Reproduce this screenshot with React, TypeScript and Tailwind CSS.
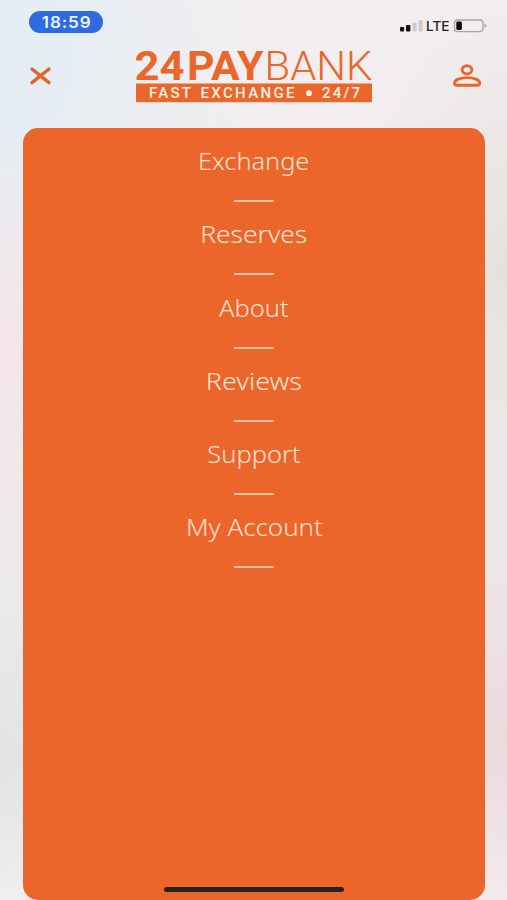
import clsx from "clsx";

const menuItems = [
  { label: "Exchange", scale: "scale-x-[1.055]" },
  { label: "Reserves", scale: "scale-x-[1.1]" },
  { label: "About", scale: "scale-x-[1.06]" },
  { label: "Reviews", scale: "scale-x-[1.12]" },
  { label: "Support", scale: "scale-x-[1.06]" },
  { label: "My Account", scale: "scale-x-[1.08]" },
];

function StatusBar() {
  return (
    <div className="flex h-11 items-start justify-between pl-[29px] pr-[20px] pt-[11px]">
      <div className="flex h-[22px] w-[74px] items-center justify-center rounded-full bg-[#2e6be0]">
        <span className="scale-x-[1.1] pl-0.5 pt-px font-['Inter',sans-serif] text-[15.5px] font-semibold leading-none tracking-[0.8px] text-[#eef4ff]">
          18:59
        </span>
      </div>
      <svg className="mt-2" width="88" height="14" viewBox="399 19 88 14">
        <rect x="400" y="27" width="4.2" height="4.4" rx="1" fill="#111" />
        <rect x="406" y="25" width="4.4" height="6.4" rx="1" fill="#111" />
        <rect x="412.5" y="22.5" width="4.2" height="9" rx="1" fill="#cfcaca" />
        <rect x="418.5" y="20" width="4.2" height="11.4" rx="1" fill="#cfcaca" />
        <text
          x="426"
          y="30.8"
          textLength="23.5"
          lengthAdjust="spacingAndGlyphs"
          fill="#222"
          className="font-['Inter',sans-serif] text-[13.5px] font-medium"
        >
          LTE
        </text>
        <rect x="454.5" y="20" width="28.5" height="11.6" rx="3" fill="none" stroke="#aaa5a3" strokeWidth="1.4" />
        <rect x="456.3" y="21.6" width="5.6" height="8.4" rx="1.4" fill="#0c0c0c" />
        <path d="M484.5 23.8q2 .6 2 2t-2 2z" fill="#aaa5a3" />
      </svg>
    </div>
  );
}

function Logo() {
  return (
    <svg className="overflow-visible" width="238" height="54" viewBox="135 49 238 54" fill="#eb662b">
      <g className="font-['Roboto',sans-serif] text-[41px]">
        <text x="134.5" y="80" textLength="50" lengthAdjust="spacingAndGlyphs" className="font-bold">
          24
        </text>
        <text x="187" y="80" textLength="76.5" lengthAdjust="spacingAndGlyphs" className="font-bold">
          PAY
        </text>
        <text x="264.5" y="80" textLength="108" lengthAdjust="spacingAndGlyphs" className="font-light">
          BANK
        </text>
      </g>
      <rect x="136" y="83.5" width="236" height="18.7" />
      <g fill="#fff1e6" className="font-['Roboto',sans-serif] text-[15px] font-medium">
        <text x="149" y="98.4" textLength="42">FAST</text>
        <text x="200.500" y="98.4" textLength="94">EXCHANGE</text>
        <circle cx="309" cy="93.2" r="2.9" />
        <text x="322" y="98.4" textLength="38">24/7</text>
      </g>
    </svg>
  );
}

function Header() {
  return (
    <header className="flex h-[84px] items-start justify-between pl-[29px] pr-[25px]">
      <button aria-label="Close" className="mt-[22px]">
        <svg width="23" height="20" viewBox="0 0 23 20" stroke="#e2652d" strokeWidth="3.4" strokeLinecap="round">
          <path d="M3 3 20 16.6M20 3 3 16.6" />
        </svg>
      </button>
      <div className="mr-auto mt-[5px] pl-[83px]">
        <Logo />
      </div>
      <button aria-label="Account" className="mt-[19px]">
        <svg width="30" height="26" viewBox="452 63 30 26" fill="none" stroke="#eb662b" strokeWidth="2.9">
          <ellipse cx="467" cy="69.8" rx="4.9" ry="4.1" />
          <path
            d="M457 85.2h20.5q2.2 0 2.2-2c0-3.400-5.800-5.600-12.600-5.600s-12.500 2.200-12.500 5.600q0 2 2.400 2z"
            strokeLinejoin="round"
          />
        </svg>
      </button>
    </header>
  );
}

export default function App() {
  return (
    <div className="flex h-[900px] w-[507px] flex-col overflow-hidden bg-[radial-gradient(ellipse_260px_300px_at_0%_6%,#e2edf3,transparent),radial-gradient(ellipse_120px_260px_at_0%_36%,#f6e5e7,transparent),radial-gradient(ellipse_140px_200px_at_0%_84%,#e1e3e3,transparent),radial-gradient(ellipse_140px_280px_at_100%_30%,#e5e2dd,transparent),radial-gradient(ellipse_140px_240px_at_100%_82%,#ecd9dc,transparent),linear-gradient(#f3eff1,#ece9ea_60%,#f6f3f4)]">
      <StatusBar />
      <Header />
      <main className="relative ml-[23px] h-[771.5px] w-[462px] rounded-[15px] bg-[#ec662c]">
        <nav className="flex flex-col items-center pt-[17px]">
          {menuItems.map(({ label, scale }) => (
            <a key={label} href="#" className="flex h-[73.25px] flex-col items-center">
              <span
                className={clsx(
                  "font-['Noto_Sans',sans-serif] text-[24px] font-light leading-[31px] text-[#ffe4cf]",
                  scale,
                )}
              >
                {label}
              </span>
              <span className="mt-6 h-0.5 w-10 bg-[#fbc3a0]" />
            </a>
          ))}
        </nav>
        {/* home indicator */}
        <div className="absolute bottom-[7.5px] left-[141px] h-[5px] w-[180px] rounded-full bg-[#27221f]" />
      </main>
    </div>
  );
}
